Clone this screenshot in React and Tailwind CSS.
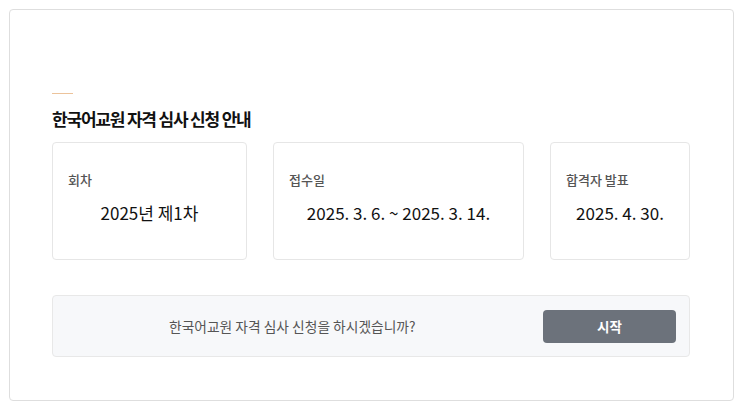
const font = { fontFamily: '"Noto Sans CJK KR", "Noto Sans", sans-serif' };

const InfoCard = ({ label, value, width }) => (
  <div className={`flex h-[118px] shrink-0 flex-col rounded border border-[#e6e6e6] bg-white px-[15px] pt-[28px] ${width}`}>
    <p className="text-[13px] leading-[18px] font-medium text-[#555]">{label}</p>
    <p className="mt-[12px] text-center text-[17px] leading-[24px] text-[#111]">{value}</p>
  </div>
);

export default function App() {
  return (
    <div className="h-[410px] w-[743px] bg-white p-[9px]" style={font}>
      <div className="h-[392px] w-[725px] rounded border border-[#dedede] bg-white pl-[42px] pr-[43px] pt-[83px]">
        <div className="h-px w-[21px] bg-[#ecc39b]" />
        <h1 className="mt-[13px] text-[17px] leading-[24px] font-bold tracking-[-0.07em] text-[#111]">
          한국어교원 자격 심사 신청 안내
        </h1>
        <div className="mt-[11px] flex justify-between">
          <InfoCard label="회차" value="2025년 제1차" width="w-[195px]" />
          <InfoCard label="접수일" value="2025. 3. 6. ~ 2025. 3. 14." width="w-[251px]" />
          <InfoCard label="합격자 발표" value="2025. 4. 30." width="w-[140px]" />
        </div>
        <div className="mt-[35px] flex h-[62px] items-center rounded border border-[#e8e8e8] bg-[#f7f8fa] pl-[116px] pr-[13px]">
          <p className="flex-1 text-[13.75px] text-[#555]">한국어교원 자격 심사 신청을 하시겠습니까?</p>
          <button className="h-[33px] w-[133px] rounded bg-[#6c727b] text-[13.5px] font-bold text-white">시작</button>
        </div>
      </div>
    </div>
  );
}
